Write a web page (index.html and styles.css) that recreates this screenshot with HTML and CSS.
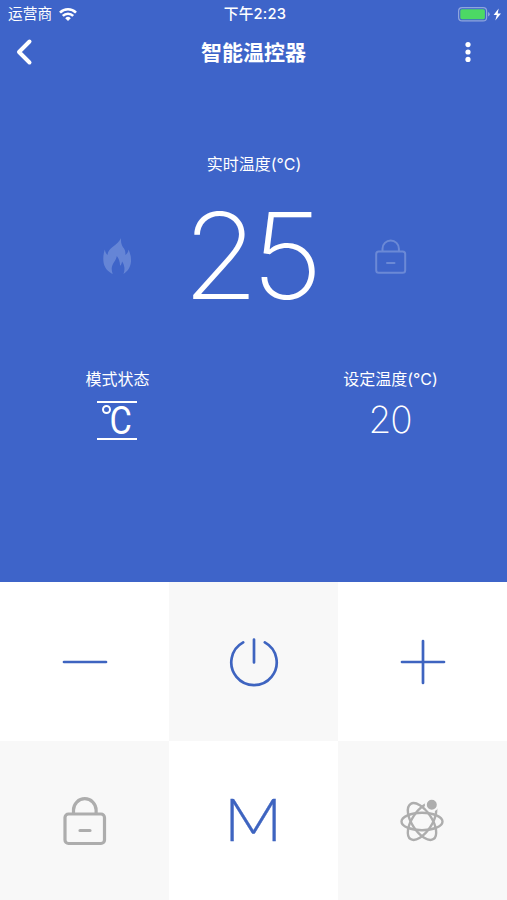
FILE: index.html
```
<!DOCTYPE html>
<html lang="zh-CN">
<head>
  <meta charset="UTF-8" />
  <meta name="viewport" content="width=device-width, initial-scale=1.0" />
  <title>智能温控器</title>
  <link rel="stylesheet" href="styles.css">
</head>
<body>
  <div class="panel">
    <div class="status-bar">
      <div class="carrier">
        <span>运营商</span>
        <svg width="18" height="13" viewBox="0 0 18 13" fill="none" stroke="#fff" stroke-width="2.6">
          <path d="M1 4.6a11.4 11.4 0 0 1 16 0M3.8 7.9a7.4 7.4 0 0 1 10.4 0" />
          <path d="M9 13L6.2 10.2a4 4 0 0 1 5.6 0z" fill="#fff" stroke="none" />
        </svg>
      </div>
      <span class="time">下午2:23</span>
      <div class="power">
        <svg width="44" height="15" viewBox="0 0 44 15">
          <rect x=".6" y=".6" width="28" height="13.3" rx="3.5" fill="none" stroke="#8fa5dd" stroke-width="1.2" />
          <rect x="2.3" y="2.3" width="24.6" height="9.9" rx="1.6" fill="#4cd964" />
          <path d="M30 5v4.6q1.8-.8 1.8-2.3T30 5z" fill="#8fa5dd" />
          <path d="M40.7 1.5L35.6 8h3.2l-1.5 5.5L43 6.5h-3.3z" fill="#fff" />
        </svg>
      </div>
    </div>

    <div class="nav">
      <svg width="18" height="28" viewBox="0 0 18 28" fill="none" stroke="#fff" stroke-width="4" stroke-linecap="round" stroke-linejoin="round">
        <path d="M14.5 3.5L4 14l10.500 10.500" />
      </svg>
      <h1>智能温控器</h1>
      <svg width="6" height="20" viewBox="0 0 6 20" fill="#fff">
        <circle cx="3" cy="2.6" r="2.6" />
        <circle cx="3" cy="10" r="2.6" />
        <circle cx="3" cy="17.4" r="2.6" />
      </svg>
    </div>

    <p class="label">实时温度(°C)</p>

    <div class="current">
      <svg width="29" height="37" viewBox="0 0 29 37" fill="#6585d6">
        <path d="M18 0c-.4 5.5 1.2 8 3 10.5 1.3 2 1.6 4 1.300 6.500 1.900-1.200 2.900-3 3.300-5.500 1.400 3.500 2.700 7 2.400 12-.4 5.500-3 9.500-7.500 12.500 1.500-3.500 1.400-8.500-1.400-12.500-.3 2-.9 3.200-2 4.200-.2-4-1.200-7.200-3.300-9.700-.6 4.500-4.300 7-5 11.500-.3 2.500.1 4.700 1 6.500C4.500 33.500 1.200 29.500.5 24 0 19.500.4 15.500 1.800 11.500c.5 2.500 1.300 4.200 2.700 5.500C4.700 9.500 15 7.500 18 0z" />
      </svg>
      <span class="degree">25</span>
      <svg width="32" height="35" viewBox="0 0 32 35" fill="none" stroke="#6b89d6" stroke-width="2" stroke-linecap="round">
        <rect x="1.2" y="12.5" width="29" height="21.3" rx="2.5" />
        <path d="M7.5 12V9.700a8.200 8.200 0 0 1 16.400 0V12M12 24h7.500" />
      </svg>
    </div>

    <div class="info">
      <div class="info-item">
        <p class="label">模式状态</p>
        <div class="mode"><i class="ring"></i><span>C</span></div>
      </div>
      <div class="info-item">
        <p class="label">设定温度(°C)</p>
        <span class="target">20</span>
      </div>
    </div>
  </div>

  <div class="keys">
    <div class="key">
      <svg width="46" height="46" viewBox="0 0 46 46">
        <path d="M2 23h42" />
      </svg>
    </div>
    <div class="key gray">
      <svg width="50" height="50" viewBox="0 0 50 50">
        <path d="M14.2 5.4a22.7 22.7 0 1 0 21.6 0M25 2.5v23" />
      </svg>
    </div>
    <div class="key">
      <svg width="46" height="46" viewBox="0 0 46 46">
        <path d="M2 23h42M23 2v42" />
      </svg>
    </div>
    <div class="key gray off">
      <svg width="44" height="50" viewBox="0 0 44 50">
        <rect x="2" y="18" width="39.5" height="29.5" rx="3.5" />
        <path d="M10.5 17.5v-3.500a11.300 11.300 0 0 1 22.600 0v3.500M17 34.500h10" />
      </svg>
    </div>
    <div class="key"><span class="letter">M</span></div>
    <div class="key gray off atom">
      <svg width="46" height="46" viewBox="0 0 46 46">
        <ellipse cx="22" cy="23.5" rx="20.5" ry="8.8" />
        <ellipse cx="22" cy="23.5" rx="21" ry="10" transform="rotate(57 22 23.5)" />
        <ellipse cx="22" cy="23.5" rx="21" ry="10" transform="rotate(-57 22 23.5)" />
        <circle class="dot" cx="31.8" cy="6.7" r="6" />
      </svg>
    </div>
  </div>
</body>
</html>
```
FILE: styles.css
```
* {
  box-sizing: border-box;
}
body {
  margin: 0;
  height: 900px;
  font-family: Inter, "Noto Sans CJK SC", sans-serif;
  background: #fff;
  color: #fff;
  display: flex;
  flex-direction: column;
}
svg {
  display: block;
}
.panel {
  height: 582px;
  background: #3e64c9;
}
.status-bar {
  height: 28px;
  padding: 0 5px 0 8px;
  display: grid;
  grid-template-columns: 1fr auto 1fr;
  align-items: center;
  font-size: 14.7px;
  line-height: 28px;
}
.carrier {
  display: flex;
  align-items: center;
  gap: 7px;
}
.time {
  font-weight: 500;
  letter-spacing: 0.2px;
}
.power {
  display: flex;
  justify-content: flex-end;
}
.nav {
  height: 48px;
  padding: 0 36px 0 15px;
  display: grid;
  grid-template-columns: 1fr auto 1fr;
  align-items: center;
}
.nav h1 {
  margin: 0 0 0 21px;
  padding-top: 2px;
  font-size: 21px;
  font-weight: 600;
  line-height: 46px;
}
.nav svg:last-child {
  justify-self: end;
}
.label {
  margin: 0;
  padding-left: 1px;
  font-size: 16px;
  line-height: 24px;
  text-align: center;
}
.panel > .label {
  margin-top: 76px;
}
.current {
  height: 120px;
  margin-top: 20px;
  padding: 0 100px 0 103px;
  display: flex;
  align-items: center;
  justify-content: space-between;
}
.degree {
  font-size: 119px;
  font-weight: 200;
  line-height: 120px;
  letter-spacing: -7px;
  margin-right: 8px;
  transform: scaleX(1.04);
}
.info {
  margin-top: 51px;
  padding: 0 35px;
  display: flex;
  justify-content: space-between;
}
.info-item {
  width: 164px;
  display: flex;
  flex-direction: column;
  align-items: center;
}
.mode {
  width: 40px;
  height: 39px;
  margin-top: 10px;
  border-top: 2px solid #fff;
  border-bottom: 2px solid #fff;
  display: flex;
  padding-left: 5px;
  font-family: Roboto, sans-serif;
  font-size: 39px;
  line-height: 36px;
}
.mode span {
  margin-left: -3px;
  transform: scaleX(0.88);
}
.ring {
  width: 9px;
  height: 9px;
  margin-top: 2px;
  border: 2px solid #fff;
  border-radius: 50%;
  flex: none;
}
.target {
  margin-top: 9px;
  font-size: 37px;
  font-weight: 200;
  line-height: 40px;
  letter-spacing: -1px;
}
.keys {
  flex: 1;
  display: grid;
  grid-template-columns: repeat(3, 1fr);
  grid-template-rows: repeat(2, 1fr);
}
.key {
  display: flex;
  align-items: center;
  justify-content: center;
  color: #3e64c0;
}
.key svg {
  fill: none;
  stroke: currentColor;
  stroke-width: 2.7;
  stroke-linecap: round;
}
.gray {
  background: #f8f8f8;
}
.off {
  color: #adadad;
}
.off svg {
  stroke-width: 3.2;
}
.atom svg {
  stroke-width: 2.4;
}
.key .dot {
  fill: currentColor;
  stroke: #f8f8f8;
  stroke-width: 2;
}
.letter {
  font-family: Lato, sans-serif;
  font-size: 60px;
  font-weight: 300;
  line-height: 60px;
  margin-top: -5px;
  -webkit-text-stroke: 0.3px currentColor;
  transform: scaleX(1.07);
}
```
